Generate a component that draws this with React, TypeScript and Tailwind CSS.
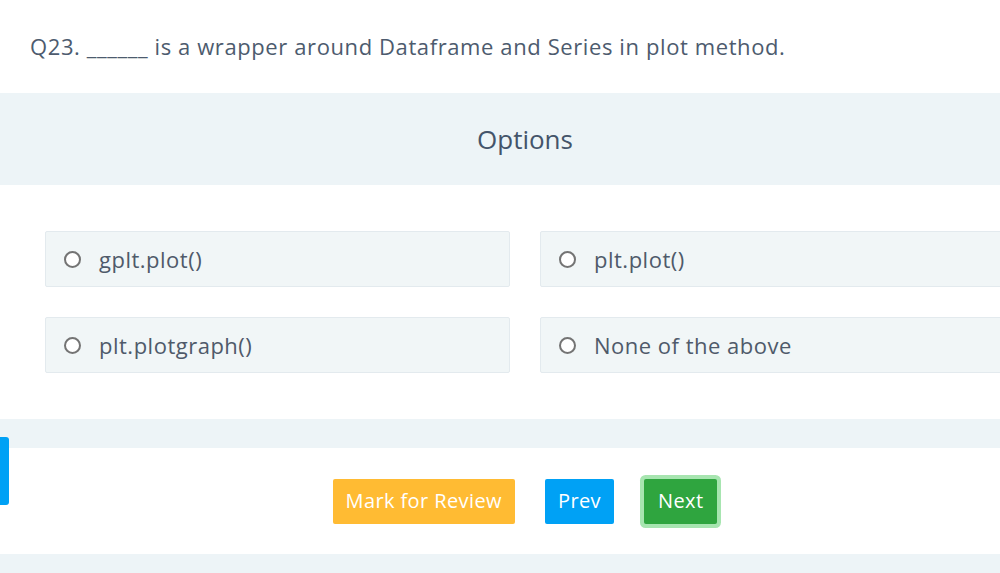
export default function App() {
  const options = ["gplt.plot()", "plt.plot()", "plt.plotgraph()", "None of the above"];

  return (
    <div className="relative h-screen w-full overflow-hidden bg-white font-['Open_Sans','Liberation_Sans',sans-serif]">
      <div className="w-[1050px]">
        <div className="h-[93px] px-[30px] pt-[31px]">
          <p className="text-[22px] leading-[30px] tracking-[0.6px] text-[#4d5b6e]">
            Q23. ______ is a wrapper around Dataframe and Series in plot method.
          </p>
        </div>

        <div className="flex h-[92px] items-center justify-center bg-[#edf4f7]">
          <h2 className="text-[26px] text-[#44546a]">Options</h2>
        </div>

        <div className="grid grid-cols-2 gap-[30px] px-[45px] py-[46px]">
          {options.map((opt) => (
            <label
              key={opt}
              className="flex h-[56px] items-center gap-[18px] rounded-[2px] border border-[#e3eaee] bg-[#f1f6f7] px-[18px]"
            >
              <span className="h-[17px] w-[17px] rounded-full border-2 border-[#747474] bg-white" />
              <span className="text-[22px] tracking-[0.5px] text-[#4f5a6a]">{opt}</span>
            </label>
          ))}
        </div>

        <div className="h-[29px] bg-[#edf4f7]" />

        <div className="flex h-[106px] items-center justify-center gap-[30px]">
          <button className="h-[45px] rounded-[2px] bg-[#ffbb33] px-[13px] text-[20px] tracking-[0.4px] text-white">
            Mark for Review
          </button>
          <button className="h-[45px] rounded-[2px] bg-[#00a1f5] px-[13px] text-[20px] tracking-[0.4px] text-white">
            Prev
          </button>
          <button className="h-[45px] rounded-[2px] bg-[#2fa53f] px-[14px] text-[20px] tracking-[0.4px] text-white ring-4 ring-[#a7e5b0]">
            Next
          </button>
        </div>

        <div className="h-[40px] bg-[#edf4f7]" />
      </div>

      <div className="absolute left-0 top-[437px] h-[68px] w-[9px] rounded-r-[3px] bg-[#00a1f5]" />
    </div>
  );
}
